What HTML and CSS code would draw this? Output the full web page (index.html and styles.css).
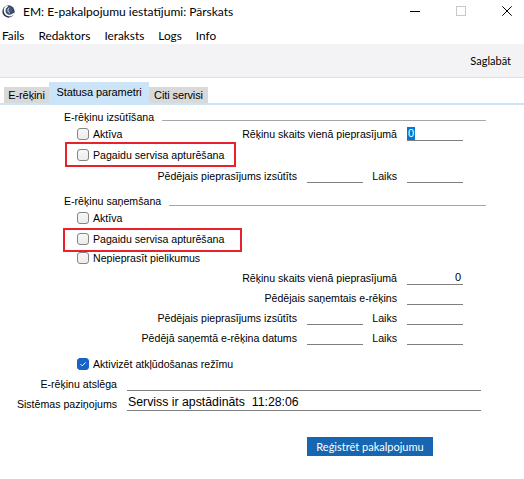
FILE: index.html
```html
<!DOCTYPE html>
<html lang="lv">
<head>
<meta charset="utf-8">
<title>EM: E-pakalpojumu iestatījumi: Pārskats</title>
<link rel="stylesheet" href="styles.css">
</head>
<body>
<div class="window">
  <header class="titlebar">
    <svg class="logo" viewBox="0 0 14 14" aria-hidden="true">
      <defs>
        <radialGradient id="lg" cx="0.55" cy="0.4" r="0.7">
          <stop offset="0" stop-color="#51658a"/>
          <stop offset="1" stop-color="#1b2640"/>
        </radialGradient>
      </defs>
      <circle cx="7" cy="7" r="6.6" fill="url(#lg)"/>
      <path d="M5.4 1.4 C1.6 3.8 1.9 10.4 7.4 11.3 C9.5 11.7 11.3 10.9 12.5 9.5" fill="none" stroke="#fff" stroke-width="1.8" stroke-linecap="round"/>
      <path d="M7.4 3.2 C5.7 4.9 5.9 7.6 8.2 8.5" fill="none" stroke="#e4eaf4" stroke-width="1" stroke-linecap="round"/>
    </svg>
    <span class="title">EM: E-pakalpojumu iestatījumi: Pārskats</span>
    <div class="controls">
      <span class="ctl"><svg viewBox="0 0 10 10" class="glyph"><path d="M0 5.5 H10" stroke="#000" stroke-width="1"/></svg></span>
      <span class="ctl"><svg viewBox="0 0 10 10" class="glyph"><rect x="0.5" y="0.5" width="9" height="9" fill="none" stroke="#c8c8c8" stroke-width="1"/></svg></span>
      <span class="ctl"><svg viewBox="0 0 10 10" class="glyph"><path d="M0.3 0.3 L9.7 9.7 M9.7 0.3 L0.3 9.7" stroke="#000" stroke-width="1"/></svg></span>
    </div>
  </header>

  <nav class="menubar">
    <span>Fails</span>
    <span>Redaktors</span>
    <span>Ieraksts</span>
    <span>Logs</span>
    <span>Info</span>
  </nav>

  <div class="toolbar">
    <span class="tool">Saglabāt</span>
  </div>

  <div class="tabs">
    <span class="tab t-erek">E-rēķini</span>
    <span class="tab t-stat active">Statusa parametri</span>
    <span class="tab t-citi">Citi servisi</span>
  </div>
  <div class="tabline"></div>

  <main class="panel">
    <div class="group-head"><span>E-rēķinu izsūtīšana</span><i class="rule"></i></div>
    <div class="fields s1">
      <label class="check r1"><span class="box"></span><span>Aktīva</span></label>
      <span class="lbl r1 span3 end">Rēķinu skaits vienā pieprasījumā</span>
      <span class="field r1 c4"><span class="hilite">0</span></span>

      <label class="check r2 hl"><span class="box"></span><span>Pagaidu servisa apturēšana</span></label>

      <span class="lbl r3 c1 end">Pēdējais pieprasījums izsūtīts</span>
      <span class="field r3 c2"></span>
      <span class="lbl r3 c3 end">Laiks</span>
      <span class="field r3 c4"></span>
    </div>

    <div class="group-head g2"><span>E-rēķinu saņemšana</span><i class="rule"></i></div>
    <div class="fields s2">
      <label class="check r1"><span class="box"></span><span>Aktīva</span></label>
      <label class="check r2 hl hl2"><span class="box"></span><span>Pagaidu servisa apturēšana</span></label>
      <label class="check r3"><span class="box"></span><span>Nepieprasīt pielikumus</span></label>

      <span class="lbl r4 span3 end">Rēķinu skaits vienā pieprasījumā</span>
      <span class="field r4 c4 num">0</span>

      <span class="lbl r5 span3 end">Pēdējais saņemtais e-rēķins</span>
      <span class="field r5 c4"></span>

      <span class="lbl r6 c1 end">Pēdējais pieprasījums izsūtīts</span>
      <span class="field r6 c2"></span>
      <span class="lbl r6 c3 end">Laiks</span>
      <span class="field r6 c4"></span>

      <span class="lbl r7 c1 end">Pēdējā saņemtā e-rēķina datums</span>
      <span class="field r7 c2"></span>
      <span class="lbl r7 c3 end">Laiks</span>
      <span class="field r7 c4"></span>
    </div>

    <div class="bottom">
      <label class="check debug"><span class="box checked"><svg viewBox="0 0 12 12"><path d="M3 6.2 L5.1 8.3 L9.2 4.1" fill="none" stroke="#fff" stroke-width="1.2"/></svg></span><span>Aktivizēt atkļūdošanas režīmu</span></label>
      <span class="lbl end">E-rēķinu atslēga</span>
      <span class="field"></span>
      <span class="lbl end">Sistēmas paziņojums</span>
      <span class="field value">Serviss ir apstādināts  11:28:06</span>
    </div>

    <button class="btn" type="button">Reģistrēt pakalpojumu</button>
  </main>
</div>
</body>
</html>
```

FILE: styles.css
```css
html, body {
  margin: 0;
  padding: 0;
  background: #ffffff;
}

body {
  font-family: "Liberation Sans", Arial, sans-serif;
  font-size: 10.6px;
  color: #000;
}

.window {
  width: 524px;
  height: 479px;
  overflow: hidden;
  background: #fff;
}

/* Title bar */
.titlebar {
  height: 26px;
  display: flex;
  align-items: flex-start;
  font-family: Lato, "Noto Sans", sans-serif;
  font-size: 12px;
}

.logo {
  width: 13px;
  height: 13px;
  margin: 5px 8px 0 2px;
  flex: none;
}

.title {
  flex: 1;
  line-height: 24px;
  white-space: nowrap;
}

.controls {
  display: flex;
  margin-right: -6px;
}

.ctl {
  width: 46px;
  height: 21px;
  display: flex;
  align-items: center;
  justify-content: center;
}

.glyph {
  width: 10px;
  height: 10px;
}

/* Menu bar */
.menubar {
  height: 18px;
  display: flex;
  align-items: center;
  gap: 14px;
  padding-left: 2px;
  font-family: Lato, "Noto Sans", sans-serif;
  font-size: 11.8px;
}

/* Toolbar */
.toolbar {
  height: 33px;
  background: #f3f3f5;
  border-bottom: 1px solid #dedfe2;
  display: flex;
  align-items: center;
  justify-content: flex-end;
  padding-right: 13px;
  font-family: Lato, "Noto Sans", sans-serif;
  font-size: 11px;
}

/* Tabs */
.tabs {
  margin-top: 4px;
  height: 21px;
  display: flex;
  align-items: flex-end;
  padding-left: 4px;
  font-size: 11px;
}

.tab {
  height: 16px;
  background: #d9d9d9;
  display: flex;
  align-items: center;
  justify-content: center;
  white-space: nowrap;
  letter-spacing: -0.1px;
}

.tab.active {
  height: 21px;
  background: #cce4f7;
  padding-bottom: 2px;
  box-sizing: border-box;
}

.t-erek { width: 45px; }
.t-stat { width: 100px; }
.t-citi { width: 59px; }

.tabline {
  height: 2px;
  background: #cce4f7;
}

/* Panel */
.panel {
  padding-top: 5px;
}

.group-head {
  margin-left: 64px;
  width: 422px;
  height: 13px;
  display: flex;
  align-items: center;
  white-space: nowrap;
}

.group-head.g2 {
  margin-top: 8px;
  height: 14px;
}

.rule {
  flex: 1;
  height: 1px;
  background: #a6a6a6;
  margin: 8px 0 0 8px;
}

.fields {
  display: grid;
  margin-left: 77px;
  grid-template-columns: 220px 56px 24px 56px;
  column-gap: 10px;
}

.fields.s1 { grid-auto-rows: 21px; }
.fields.s2 { grid-auto-rows: 20px; }

.r1 { grid-row: 1; }
.r2 { grid-row: 2; }
.r3 { grid-row: 3; }
.r4 { grid-row: 4; }
.r5 { grid-row: 5; }
.r6 { grid-row: 6; }
.r7 { grid-row: 7; }

.c1 { grid-column: 1; }
.c2 { grid-column: 2; }
.c3 { grid-column: 3; }
.c4 { grid-column: 4; }
.span3 { grid-column: 1 / 4; }

.lbl {
  align-self: center;
  white-space: nowrap;
}

.end { justify-self: end; }

.field {
  align-self: end;
  height: 15px;
  margin-bottom: 3px;
  border-bottom: 1px solid #7f7f7f;
  box-sizing: border-box;
  white-space: nowrap;
  line-height: 14px;
}

.field.num {
  text-align: right;
  padding-right: 2px;
  font-size: 11px;
}

.hilite {
  display: inline-block;
  background: #0078d7;
  color: #fff;
  padding: 0 1px;
  line-height: 13px;
  font-size: 11px;
}

/* Checkboxes */
.check {
  grid-column: 1 / 3;
  justify-self: start;
  align-self: center;
  display: flex;
  align-items: center;
  gap: 4px;
  white-space: nowrap;
}

.box {
  width: 12px;
  height: 12px;
  box-sizing: border-box;
  border: 1px solid #858585;
  border-radius: 3px;
  background: linear-gradient(#f7f7f7, #ececec);
  flex: none;
}

.box.checked {
  background: #1763c6;
  border-color: #1763c6;
  display: flex;
}

.box.checked svg {
  width: 10px;
  height: 10px;
}

.hl {
  align-self: stretch;
  margin: -2px 0 -2px -12px;
  padding-left: 10px;
  width: 171px;
  box-sizing: border-box;
  border: 2px solid #e8212b;
}

.hl.hl2 {
  margin: 0 0 -4px -14px;
  padding-left: 12px;
  padding-bottom: 2px;
  width: 179px;
}

/* Bottom rows */
.bottom {
  display: grid;
  grid-template-columns: 117px 354px;
  column-gap: 10px;
  grid-auto-rows: 20px;
  margin-top: 6px;
}

.check.debug {
  grid-column: 1 / 3;
  margin-left: 77px;
}

.field.value {
  font-size: 12.3px;
  padding-left: 1px;
  line-height: 15px;
  white-space: pre;
  height: 16px;
}

/* Button */
.btn {
  display: block;
  margin: 23px 0 0 307px;
  width: 126px;
  height: 19px;
  padding: 0;
  border: 0;
  background: #1666b2;
  color: #fff;
  font-family: Lato, "Noto Sans", sans-serif;
  font-size: 11px;
  line-height: 19px;
  text-align: center;
}
```
